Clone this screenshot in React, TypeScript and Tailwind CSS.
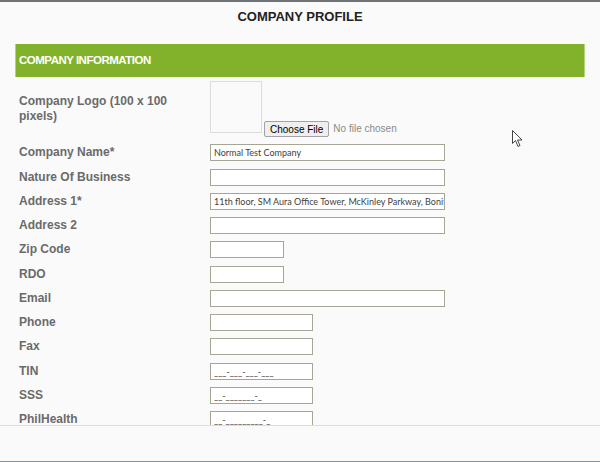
import React from 'react';

type Field = { label: string; value?: string; width: string };

const fields: Field[] = [
  { label: 'Company Name*', value: 'Normal Test Company', width: 'w-[235px]' },
  { label: 'Nature Of Business', width: 'w-[235px]' },
  { label: 'Address 1*', value: '11th floor, SM Aura Office Tower, McKinley Parkway, Bonifacio Global City, Taguig', width: 'w-[235px]' },
  { label: 'Address 2', width: 'w-[235px]' },
  { label: 'Zip Code', width: 'w-[74px]' },
  { label: 'RDO', width: 'w-[74px]' },
  { label: 'Email', width: 'w-[235px]' },
  { label: 'Phone', width: 'w-[103px]' },
  { label: 'Fax', width: 'w-[103px]' },
  { label: 'TIN', value: '___-___-___-___', width: 'w-[103px]' },
  { label: 'SSS', value: '__-_______-_', width: 'w-[103px]' },
  { label: 'PhilHealth', value: '__-_________-_', width: 'w-[103px]' },
];

const labelCls = "font-['Liberation_Sans',Arial,sans-serif] text-[12px] font-bold leading-[15px] text-[#6a6a6a]";

function TextBox({ value, width }: { value?: string; width: string }) {
  return (
    <div
      className={`${width} h-[17px] border border-[#a7a696] bg-white px-[3px] overflow-hidden whitespace-nowrap font-['Lato',sans-serif] text-[9px] leading-[15px] text-[#404040]`}
    >
      {value}
    </div>
  );
}

export default function App() {
  return (
    <div className="relative w-[600px] h-[462px] flex flex-col bg-[#fafafa] border-t-2 border-[#6f7479] overflow-hidden">
      {/* scrolling content */}
      <div className="flex-1 overflow-hidden">
        <h1 className="pt-[7px] text-center font-['Liberation_Sans',Arial,sans-serif] text-[13px] font-bold leading-[15px] text-[#222]">
          COMPANY PROFILE
        </h1>

        <div className="mx-[15px] mt-[20px] h-[33px] flex items-center bg-[#82b22b] border-x border-[#b3d477] px-[3px]">
          <span className="font-['Liberation_Sans',Arial,sans-serif] text-[11.5px] font-bold tracking-[-0.5px] text-white">
            COMPANY INFORMATION
          </span>
        </div>

        <div className="mt-[4px] ml-[19px] grid grid-cols-[191px_1fr] gap-y-[7.25px] items-center">
          {/* logo */}
          <div className={`${labelCls} w-[160px]`}>Company Logo (100 x 100 pixels)</div>
          <div className="flex items-start">
            <div className="w-[52px] h-[52px] border border-[#dcdcdc] bg-[#fafafa]" />
            <div className="mt-[40px] ml-[2px] h-[16px] px-[5px] flex items-center rounded-[2px] border border-[#a3a3a3] bg-[#efefef] font-['Liberation_Sans',Arial,sans-serif] text-[10px] text-black">
              Choose File
            </div>
            <span className="mt-[40px] ml-[4px] h-[16px] leading-[16px] font-['Liberation_Sans',Arial,sans-serif] text-[10px] text-[#8a8a8a]">
              No file chosen
            </span>
          </div>

          {fields.map((f) => (
            <React.Fragment key={f.label}>
              <div className={labelCls}>{f.label}</div>
              <TextBox value={f.value} width={f.width} />
            </React.Fragment>
          ))}
        </div>
      </div>

      {/* footer */}
      <div className="h-[37px] shrink-0 border-t border-[#dcdcdc] border-b border-b-[#5b9bd5] bg-[#fafafa]" />

      {/* mouse pointer */}
      <svg className="absolute left-[512px] top-[128px]" width="12" height="18" viewBox="0 0 12 18">
        <path d="M0.5 0.5 L0.5 13.5 L3.5 10.5 L6 16.5 L8 15.5 L5.5 10 L10 10 Z" fill="#fff" stroke="#444" strokeWidth="1" />
      </svg>
    </div>
  );
}
